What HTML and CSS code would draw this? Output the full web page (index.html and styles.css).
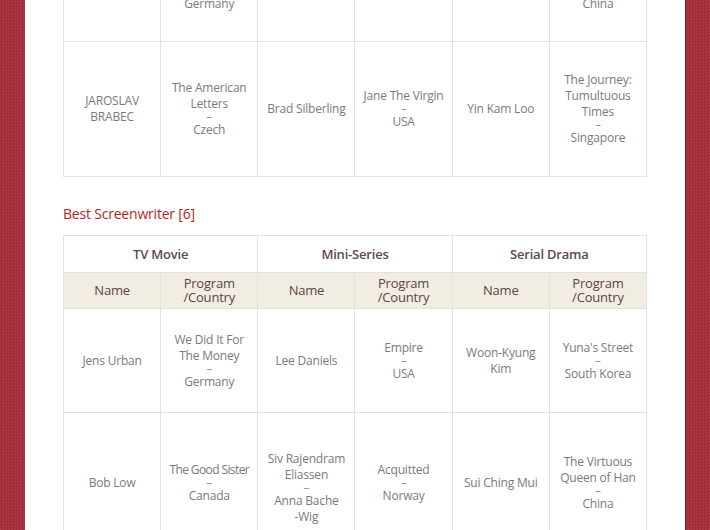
FILE: index.html
```html
<!DOCTYPE html>
<html>
<head>
<meta charset="utf-8">
<link rel="stylesheet" href="styles.css">
</head>
<body>
<div class="page">
  <div class="side side-left"></div>
  <main class="content">
    <table class="awards first">
      <colgroup><col><col><col><col><col><col></colgroup>
      <tbody>
        <tr class="row-prev">
          <td></td>
          <td>Tatort<span class="dash">–</span>Germany</td>
          <td></td>
          <td></td>
          <td></td>
          <td>Ode to Joy<span class="dash">–</span>China</td>
        </tr>
        <tr class="row-tall">
          <td>JAROSLAV<br>BRABEC</td>
          <td>The American<br>Letters<span class="dash">–</span>Czech</td>
          <td>Brad Silberling</td>
          <td>Jane The Virgin<span class="dash">–</span>USA</td>
          <td>Yin Kam Loo</td>
          <td>The Journey:<br>Tumultuous<br>Times<span class="dash">–</span>Singapore</td>
        </tr>
      </tbody>
    </table>

    <h2 class="section-title">Best Screenwriter [6]</h2>

    <table class="awards">
      <colgroup><col><col><col><col><col><col></colgroup>
      <thead>
        <tr class="group-row">
          <th colspan="2">TV Movie</th>
          <th colspan="2">Mini-Series</th>
          <th colspan="2">Serial Drama</th>
        </tr>
        <tr class="sub-row">
          <th>Name</th>
          <th>Program<br>/Country</th>
          <th>Name</th>
          <th>Program<br>/Country</th>
          <th>Name</th>
          <th>Program<br>/Country</th>
        </tr>
      </thead>
      <tbody>
        <tr class="row-mid">
          <td>Jens Urban</td>
          <td>We Did It For<br>The Money<span class="dash">–</span>Germany</td>
          <td>Lee Daniels</td>
          <td>Empire<span class="dash">–</span>USA</td>
          <td>Woon-Kyung<br>Kim</td>
          <td>Yuna's Street<span class="dash">–</span>South Korea</td>
        </tr>
        <tr class="row-low">
          <td>Bob Low</td>
          <td><span class="narrow">The Good Sister</span><span class="dash">–</span>Canada</td>
          <td class="shift">Siv Rajendram<br>Eliassen<span class="dash">–</span>Anna Bache<br>-Wig</td>
          <td>Acquitted<span class="dash">–</span>Norway</td>
          <td>Sui Ching Mui</td>
          <td>The Virtuous<br>Queen of Han<span class="dash">–</span>China</td>
        </tr>
      </tbody>
    </table>
  </main>
  <div class="side side-right"></div>
</div>
</body>
</html>
```

FILE: styles.css
```css
* { box-sizing: border-box; }
html, body { margin: 0; padding: 0; height: 100%; overflow: hidden; background: #fff; }
body { font-family: "Open Sans", "Noto Sans", sans-serif; }

.page {
  display: flex;
  width: 710px;
  height: 530px;
  overflow: hidden;
}

.side {
  flex: 0 0 25px;
  background-color: #a5323b;
  background-image: repeating-conic-gradient(#9c2c35 0 25%, #ad3a43 0 50%);
  background-size: 3px 3px;
}
.side-right { box-shadow: inset 1px 0 0 #86232b; }

.content {
  flex: 1 1 auto;
  padding-left: 38px;
  background: #fff;
}

.awards {
  width: 584px;
  border-collapse: collapse;
  table-layout: fixed;
  color: #7a7a7a;
  font-size: 12px;
  letter-spacing: -0.2px;
  line-height: 16px;
}
.awards col { width: 97px; }

.awards td, .awards th {
  border: 1px solid #e2e2e2;
  text-align: center;
  vertical-align: middle;
  padding: 0 2px;
}

.first { margin-top: -60px; }

.row-prev td { height: 101px; }
.row-tall td { height: 135px; }
.row-mid td { height: 104px; }
.row-low td { height: 140px; }
.awards td.shift { padding-top: 10px; }

.dash {
  display: block;
  line-height: 10px;
  font-size: 12px;
  color: #9a9a9a;
}
.narrow { letter-spacing: -0.6px; }

.section-title {
  margin: 27px 0 11px;
  color: #b01f27;
  font-size: 14px;
  font-weight: 400;
  line-height: 20px;
  letter-spacing: -0.2px;
}

.awards th {
  color: #5a4646;
  font-weight: 400;
  font-size: 13px;
}
.group-row th { height: 37px; background: #fff; font-weight: 600; font-size: 13px; color: #5e4a4a; }
.sub-row th {
  height: 36px;
  background: #f2ede3;
  line-height: 14px;
  padding-bottom: 2px;
  border-top-color: #f2ede3;
  border-bottom-color: #e2e2e2;
}
```
